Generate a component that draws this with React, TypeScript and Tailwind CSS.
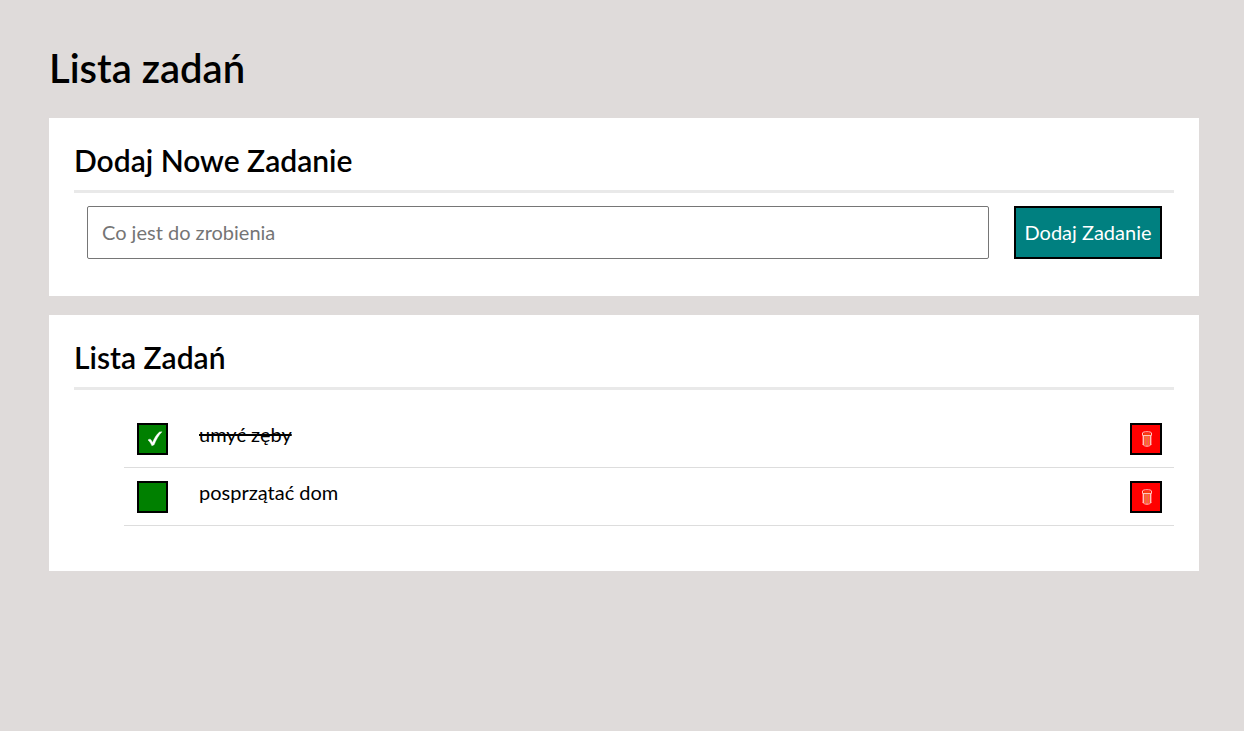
import { useState } from "react";
import type { FormEvent, ReactNode } from "react";

type Task = { id: number; content: string; done: boolean };

const initialTasks: Task[] = [
  { id: 1, content: "umyć zęby", done: true },
  { id: 2, content: "posprzątać dom", done: false },
];

function CheckIcon() {
  return (
    <svg className="ml-1 h-4 w-4" viewBox="0 0 16 16" fill="#fff" stroke="#fff" strokeWidth=".4" strokeLinejoin="round" aria-hidden="true">
      <path d="M1 9C1.700 8.100 3.300 7.900 4 8.800L5.500 11.600C7.200 7.300 9.600 3.400 12.500 1L15 .8C11.500 4.300 9.200 8.700 7.100 13.800L4.900 14.800C3.900 12.400 2.700 10.400 1 9Z" />
    </svg>
  );
}

function TrashIcon() {
  return (
    <svg className="ml-px h-4 w-[10px]" viewBox="0 0 10 16" fill="none" stroke="#ffc4bc" aria-hidden="true">
      <path d="M1.500 5V14M8.500 5V14" strokeWidth="1.800" />
      <path d="M3.500 5V14.500M6.500 5V14.500" stroke="#ee7a20" />
      <path d="M5 5V15" stroke="#ffb09a" />
      <path d="M1 13.500C2 15.800 8 15.800 9 13.500" />
      <path d="M.5 2C.5.3 9.500.3 9.500 2V4.500H.5Z" />
      <path d="M1.500 3H8.500" stroke="#ee7a20" />
    </svg>
  );
}

function Section({ title, children }: { title: string; children: ReactNode }) {
  return (
    <section className="bg-white px-[25px] pt-6">
      <h2 className="border-b-[3px] border-[#e9e9e9] pb-3 text-[30px] leading-9 font-semibold">{title}</h2>
      {children}
    </section>
  );
}

export default function App() {
  const [tasks, setTasks] = useState(initialTasks);
  const [content, setContent] = useState("");

  const addTask = (event: FormEvent) => {
    event.preventDefault();
    if (!content.trim()) return;
    setTasks([...tasks, { id: Date.now(), content: content.trim(), done: false }]);
    setContent("");
  };

  const toggleTask = (id: number) =>
    setTasks(tasks.map((task) => (task.id === id ? { ...task, done: !task.done } : task)));

  return (
    <div className="min-h-screen bg-[#dfdbda] pt-11 pr-[45px] pb-10 pl-[49px] font-['Lato',sans-serif] text-xl text-black">
      <h1 className="mb-[26px] text-[40px] leading-[48px] font-semibold">Lista zadań</h1>
      <main className="flex flex-col gap-[19px]">
        <Section title="Dodaj Nowe Zadanie">
          <form onSubmit={addTask} className="flex gap-[25px] pt-[13px] pr-3 pb-[37px] pl-[13px]">
            <input
              aria-label="Co jest do zrobienia"
              placeholder="Co jest do zrobienia"
              value={content}
              onChange={(event) => setContent(event.target.value)}
              className="h-[53px] min-w-0 flex-1 rounded-xs border border-[#767676] px-[14px] pb-0.5 placeholder:text-[#757575]"
            />
            <button className="w-[148px] shrink-0 border-2 border-black bg-[#008080] pb-0.5 text-white">
              Dodaj Zadanie
            </button>
          </form>
        </Section>
        <Section title="Lista Zadań">
          <ul className="pt-5 pb-[45px] pl-[50px]">
            {tasks.map((task) => (
              <li key={task.id} className="flex h-[58px] items-start border-b border-[#dddddd] pt-[13px] pr-3 pl-[13px]">
                <button
                  aria-label={`Ukończone: ${task.content}`}
                  aria-pressed={task.done}
                  onClick={() => toggleTask(task.id)}
                  className="flex h-8 w-[31px] shrink-0 items-center justify-center border-2 border-black bg-[#008000]"
                >
                  {task.done && <CheckIcon />}
                </button>
                <span className={task.done ? "ml-[31px] flex-1 leading-[22px] line-through" : "ml-[31px] flex-1 leading-[22px]"}>
                  {task.content}
                </span>
                <button
                  aria-label={`Usuń: ${task.content}`}
                  onClick={() => setTasks(tasks.filter((item) => item.id !== task.id))}
                  className="flex h-8 w-8 shrink-0 items-center justify-center border-2 border-black bg-[#ff0000]"
                >
                  <TrashIcon />
                </button>
              </li>
            ))}
          </ul>
        </Section>
      </main>
    </div>
  );
}
